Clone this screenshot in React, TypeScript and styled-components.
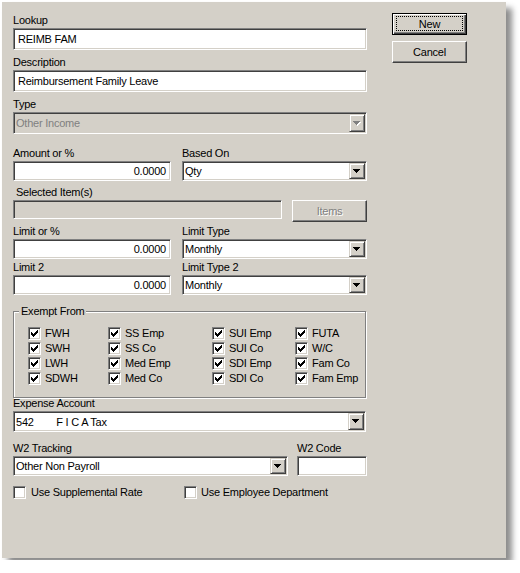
import React from "react";
import styled, { createGlobalStyle, css } from "styled-components";

const FACE = "#D4D0C8";

const Global = createGlobalStyle`
  html, body { margin: 0; padding: 0; background: #ffffff; }
  body { font-family: "Liberation Sans", Arial, sans-serif; font-size: 11px; letter-spacing: -0.23px; color: #000; }
`;

const sunken = css`
  box-sizing: border-box;
  border: 1px solid;
  border-color: #808080 #ffffff #ffffff #808080;
  box-shadow: inset 1px 1px 0 #404040, inset -1px -1px 0 ${FACE};
`;

const Page = styled.div`
  padding: 2px;
`;

const Dialog = styled.div`
  box-sizing: border-box;
  width: 504px;
  height: 556px;
  background: ${FACE};
  box-shadow: 6px 6px 6px rgba(0, 0, 0, 0.45);
  padding: 11px 0 0 11px;
  display: grid;
  grid-template-columns: 354px 75px;
  column-gap: 25px;
  align-items: start;
`;

const Form = styled.div`
  display: flex;
  flex-direction: column;
`;

const Field = styled.div<{ $mt?: number }>`
  display: flex;
  flex-direction: column;
  margin-top: ${(p) => p.$mt ?? 0}px;
`;

const Label = styled.div<{ $shift?: number; $indent?: number }>`
  height: 13px;
  line-height: 13px;
  padding-top: ${(p) => p.$shift ?? 0}px;
  padding-left: ${(p) => p.$indent ?? 0}px;
  margin-bottom: 1px;
  white-space: nowrap;
`;

const Pair = styled.div<{ $mt?: number; $cols: string; $gap: number; $align?: string }>`
  display: grid;
  grid-template-columns: ${(p) => p.$cols};
  column-gap: ${(p) => p.$gap}px;
  align-items: ${(p) => p.$align ?? "end"};
  margin-top: ${(p) => p.$mt ?? 0}px;
`;

const Edit = styled.div<{ $h?: number; $right?: boolean; $disabled?: boolean }>`
  ${sunken};
  height: ${(p) => p.$h ?? 20}px;
  background: ${(p) => (p.$disabled ? FACE : "#ffffff")};
  display: flex;
  align-items: center;
  justify-content: ${(p) => (p.$right ? "flex-end" : "flex-start")};
  padding: 0 4px;
  white-space: nowrap;
  overflow: hidden;
`;

const Combo = styled.div<{ $h?: number; $disabled?: boolean; $w?: number }>`
  ${sunken};
  height: ${(p) => p.$h ?? 20}px;
  width: ${(p) => (p.$w ? `${p.$w}px` : "auto")};
  background: ${(p) => (p.$disabled ? FACE : "#ffffff")};
  color: ${(p) => (p.$disabled ? "#808080" : "#000")};
  display: flex;
  align-items: stretch;
  padding: 1px;
`;

const ComboText = styled.span`
  flex: 1;
  display: flex;
  align-items: center;
  padding-left: 1px;
  white-space: pre;
  overflow: hidden;
`;

const DropButton = styled.span`
  box-sizing: border-box;
  width: 16px;
  flex-shrink: 0;
  background: ${FACE};
  border: 1px solid;
  border-color: ${FACE} #404040 #404040 ${FACE};
  box-shadow: inset 1px 1px 0 #ffffff, inset -1px -1px 0 #808080;
  display: flex;
  align-items: center;
  justify-content: center;
`;

const Arrow = ({ disabled }: { disabled?: boolean }) => (
  <svg width="8" height="5" viewBox="0 0 8 5" shapeRendering="crispEdges">
    {disabled && (
      <path d="M1 1h7v1H1z M2 2h5v1H2z M3 3h3v1H3z M4 4h1v1H4z" fill="#ffffff" />
    )}
    <path d="M0 0h7v1H0z M1 1h5v1H1z M2 2h3v1H2z M3 3h1v1H3z" fill={disabled ? "#808080" : "#000000"} />
  </svg>
);

const Select = ({ value, h, w, disabled }: { value: string; h?: number; w?: number; disabled?: boolean }) => (
  <Combo $h={h} $w={w} $disabled={disabled}>
    <ComboText>{value}</ComboText>
    <DropButton>
      <Arrow disabled={disabled} />
    </DropButton>
  </Combo>
);

const Buttons = styled.div`
  display: flex;
  flex-direction: column;
  gap: 6px;
`;

const Button = styled.div<{ $default?: boolean; $disabled?: boolean }>`
  box-sizing: border-box;
  width: 75px;
  height: 22px;
  background: ${FACE};
  display: flex;
  padding: 3px;
  color: ${(p) => (p.$disabled ? "#808080" : "#000")};
  text-shadow: ${(p) => (p.$disabled ? "1px 1px 0 #ffffff" : "none")};
  ${(p) =>
    p.$default
      ? css`
          border: 1px solid #000;
          box-shadow: inset 1px 1px 0 #ffffff, inset -1px -1px 0 #404040, inset -2px -2px 0 #808080;
        `
      : css`
          border: 1px solid;
          border-color: #ffffff #404040 #404040 #ffffff;
          box-shadow: inset -1px -1px 0 #808080;
        `}
`;

const ButtonFace = styled.span<{ $focus?: boolean }>`
  flex: 1;
  display: flex;
  align-items: center;
  justify-content: center;
  border: 1px ${(p) => (p.$focus ? "dotted #000" : "solid transparent")};
  margin: ${(p) => (p.$focus ? "-1px 0 0 0" : "0")};
`;

const Group = styled.div`
  position: relative;
  box-sizing: border-box;
  width: 353px;
  margin-top: 16px;
  border: 1px solid #808080;
  box-shadow: inset 1px 1px 0 #ffffff, 1px 1px 0 #ffffff;
  padding: 15px 0 10px 14px;
`;

const Legend = styled.span`
  position: absolute;
  top: -7px;
  left: 5px;
  padding: 0 2px;
  line-height: 13px;
  background: ${FACE};
`;

const CheckGrid = styled.div`
  display: grid;
  grid-template-columns: 80px 104px 83px auto;
  grid-auto-rows: 15px;
  align-items: start;
`;

const CheckItem = styled.label<{ $gap?: number }>`
  display: flex;
  align-items: center;
  gap: ${(p) => p.$gap ?? 4}px;
  height: 13px;
  line-height: 13px;
  white-space: nowrap;
`;

const Box = styled.span`
  ${sunken};
  width: 13px;
  height: 13px;
  background: #ffffff;
  flex-shrink: 0;
  display: flex;
  align-items: center;
  justify-content: center;
`;

const CheckMark = () => (
  <svg width="7" height="7" viewBox="0 0 7 7" shapeRendering="crispEdges">
    <path
      d="M6 0h1v1H6z M5 1h2v1H5z M0 2h1v1H0z M4 2h3v1H4z M0 3h2v1H0z M3 3h3v1H3z M0 4h5v1H0z M1 5h3v1H1z M2 6h1v1H2z"
      fill="#000"
    />
  </svg>
);

const Check = ({ label, checked, gap }: { label: string; checked?: boolean; gap?: number }) => (
  <CheckItem $gap={gap}>
    <Box>{checked && <CheckMark />}</Box>
    <span>{label}</span>
  </CheckItem>
);

const BottomRow = styled.div`
  display: grid;
  grid-template-columns: 171px auto;
  margin-top: 10px;
`;

const exempt = [
  "FWH", "SS Emp", "SUI Emp", "FUTA",
  "SWH", "SS Co", "SUI Co", "W/C",
  "LWH", "Med Emp", "SDI Emp", "Fam Co",
  "SDWH", "Med Co", "SDI Co", "Fam Emp",
];

export default function App() {
  return (
    <>
      <Global />
      <Page>
        <Dialog>
          <Form>
            <Field $mt={1}>
              <Label>Lookup</Label>
              <Edit $h={22}>REIMB FAM</Edit>
            </Field>
            <Field $mt={6}>
              <Label>Description</Label>
              <Edit $h={22}>Reimbursement Family Leave</Edit>
            </Field>
            <Field $mt={6}>
              <Label>Type</Label>
              <Select h={22} value="Other Income" disabled />
            </Field>

            <Pair $mt={10} $cols="158px 185px" $gap={11}>
              <Field>
                <Label>Amount or %</Label>
                <Edit $right>0.0000</Edit>
              </Field>
              <Field>
                <Label $shift={3}>Based On</Label>
                <Select value="Qty" />
              </Field>
            </Pair>

            <Field $mt={5}>
              <Label $indent={3}>Selected Item(s)</Label>
              <Pair $cols="269px 75px" $gap={10} $align="start">
                <Edit $h={19} $disabled />
                <Button $disabled>
                  <ButtonFace>Items</ButtonFace>
                </Button>
              </Pair>
            </Field>

            <Pair $mt={3} $cols="158px 185px" $gap={11}>
              <Field>
                <Label>Limit or %</Label>
                <Edit $right>0.0000</Edit>
              </Field>
              <Field>
                <Label>Limit Type</Label>
                <Select value="Monthly" />
              </Field>
            </Pair>

            <Pair $mt={2} $cols="158px 185px" $gap={11}>
              <Field>
                <Label>Limit 2</Label>
                <Edit $right>0.0000</Edit>
              </Field>
              <Field>
                <Label>Limit Type 2</Label>
                <Select value="Monthly" />
              </Field>
            </Pair>

            <Group>
              <Legend>Exempt From</Legend>
              <CheckGrid>
                {exempt.map((e) => (
                  <Check key={e} label={e} checked />
                ))}
              </CheckGrid>
            </Group>

            <Field $mt={-1}>
              <Label>Expense Account</Label>
              <Select h={21} w={353} value={"542        F I C A Tax"} />
            </Field>

            <Pair $mt={10} $cols="275px 70px" $gap={9}>
              <Field>
                <Label>W2 Tracking</Label>
                <Select value="Other Non Payroll" />
              </Field>
              <Field>
                <Label>W2 Code</Label>
                <Edit />
              </Field>
            </Pair>

            <BottomRow>
              <Check label="Use Supplemental Rate" gap={5} />
              <Check label="Use Employee Department" gap={4} />
            </BottomRow>
          </Form>

          <Buttons>
            <Button $default>
              <ButtonFace $focus>New</ButtonFace>
            </Button>
            <Button>
              <ButtonFace>Cancel</ButtonFace>
            </Button>
          </Buttons>
        </Dialog>
      </Page>
    </>
  );
}
